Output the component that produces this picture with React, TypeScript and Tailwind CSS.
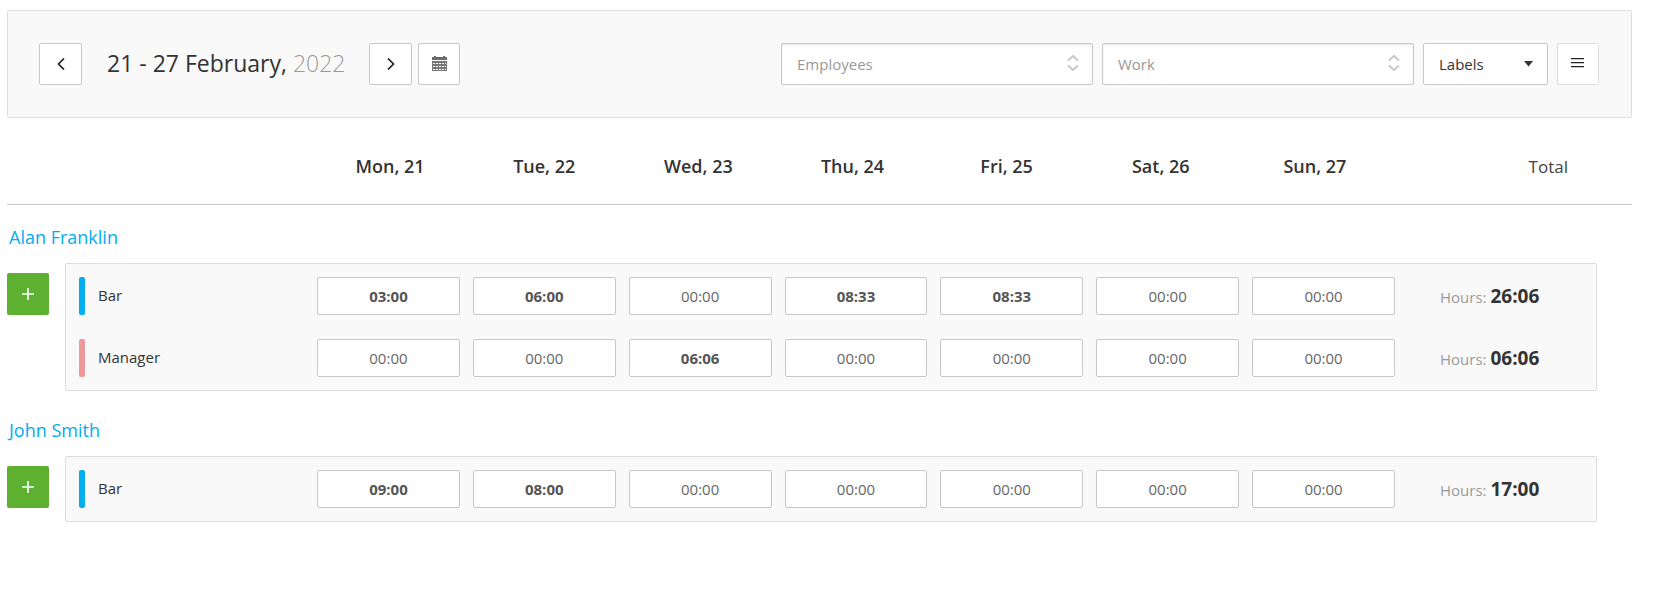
import { useState } from 'react';

interface WorkRow {
  title: string;
  color: string;
  hours: string[];
}

interface Employee {
  name: string;
  works: WorkRow[];
}

const DAYS = ['Mon, 21', 'Tue, 22', 'Wed, 23', 'Thu, 24', 'Fri, 25', 'Sat, 26', 'Sun, 27'];

const EMPTY = '00:00';

const INITIAL: Employee[] = [
  {
    name: 'Alan Franklin',
    works: [
      { title: 'Bar', color: 'bg-[#00aeef]', hours: ['03:00', '06:00', EMPTY, '08:33', '08:33', EMPTY, EMPTY] },
      { title: 'Manager', color: 'bg-[#ef9a9a]', hours: [EMPTY, EMPTY, '06:06', EMPTY, EMPTY, EMPTY, EMPTY] },
    ],
  },
  {
    name: 'John Smith',
    works: [
      { title: 'Bar', color: 'bg-[#00aeef]', hours: ['09:00', '08:00', EMPTY, EMPTY, EMPTY, EMPTY, EMPTY] },
    ],
  },
];

const sumHours = (hours: string[]) => {
  const minutes = hours.reduce((total, value) => {
    const [h, m] = value.split(':').map(Number);
    return total + (h || 0) * 60 + (m || 0);
  }, 0);
  const pad = (n: number) => String(n).padStart(2, '0');
  return `${pad(Math.floor(minutes / 60))}:${pad(minutes % 60)}`;
};

const iconButton = 'flex h-[42px] shrink-0 items-center justify-center rounded-xs border bg-white';

const CalendarIcon = () => (
  <svg width="15" height="16" viewBox="0 0 15 16" fill="none" aria-hidden="true">
    <path d="M0 1h2V0h2v1h7V0h2v1h2v3H0z" fill="#6b6b6b" />
    <path d="M0 5h15v10H0z" fill="#777" />
    <path d="M1 7.5h13M1 10.5h13M1 13.5h13" stroke="#fff" strokeDasharray="2 1" />
  </svg>
);

const FilterSelect = ({ label }: { label: string }) => (
  <div className="relative w-[312px] min-w-0">
    <select
      aria-label={label}
      className="h-[42px] w-full appearance-none rounded-xs border border-[#c8c8c8] bg-white pr-9 pl-[15px] text-[15px] text-[#999] shadow-[inset_0_1px_2px_rgba(0,0,0,0.1)]"
    >
      <option>{label}</option>
    </select>
    <svg
      className="pointer-events-none absolute top-3 right-[14px]"
      width="12"
      height="16"
      viewBox="0 0 12 16"
      fill="none"
      stroke="#c8c8c8"
      strokeWidth="2"
      aria-hidden="true"
    >
      <path d="M1 5.500 6 1l5 4.500M1 10.500 6 15l5-4.500" />
    </svg>
  </div>
);

export default function App() {
  const [employees, setEmployees] = useState<Employee[]>(INITIAL);

  const handleHoursChange = (employeeIndex: number, workIndex: number, dayIndex: number, value: string) => {
    setEmployees(prev =>
      prev.map((employee, e) =>
        e !== employeeIndex
          ? employee
          : {
              ...employee,
              works: employee.works.map((work, w) =>
                w !== workIndex ? work : { ...work, hours: work.hours.map((h, d) => (d === dayIndex ? value : h)) }
              ),
            }
      )
    );
  };

  const addWork = (employeeIndex: number) => {
    setEmployees(prev =>
      prev.map((employee, e) =>
        e !== employeeIndex
          ? employee
          : {
              ...employee,
              works: [...employee.works, { title: 'Bar', color: 'bg-[#00aeef]', hours: DAYS.map(() => EMPTY) }],
            }
      )
    );
  };

  return (
    <main className="min-h-screen bg-white pt-[10px] pr-[25px] pb-10 pl-[7px] font-['Open_Sans',sans-serif] text-[15px] text-[#333]">
      <header className="flex items-center justify-between rounded-xs border border-[#ddd] bg-[#f9f9f9] py-8 pr-8 pl-[31px]">
        <div className="flex items-center">
          <button type="button" aria-label="Previous week" className={`${iconButton} w-[43px] border-[#c8c8c8]`}>
            <svg width="8" height="12" viewBox="0 0 8 12" fill="none" stroke="#222" strokeWidth="1.7" aria-hidden="true">
              <path d="M7 .5 1.500 6 7 11.500" />
            </svg>
          </button>
          <h1 className="pr-6 pb-[2px] pl-[25px] text-[23px] leading-10 font-medium whitespace-nowrap">
            21 - 27 February, <span className="font-light text-[#999]">2022</span>
          </h1>
          <button type="button" aria-label="Next week" className={`${iconButton} w-[43px] border-[#c8c8c8]`}>
            <svg width="8" height="12" viewBox="0 0 8 12" fill="none" stroke="#222" strokeWidth="1.7" aria-hidden="true">
              <path d="M1 .5 6.500 6 1 11.500" />
            </svg>
          </button>
          <button type="button" aria-label="Open calendar" className={`${iconButton} ml-[6px] w-[42px] border-[#c8c8c8]`}>
            <CalendarIcon />
          </button>
        </div>

        <div className="flex min-w-0 items-center gap-[9px]">
          <FilterSelect label="Employees" />
          <FilterSelect label="Work" />
          <div className="relative w-[125px] shrink-0">
            <select
              aria-label="Labels"
              className="h-[42px] w-full appearance-none rounded-xs border border-[#c8c8c8] bg-white pr-8 pl-[15px] text-[15px] text-[#333]"
            >
              <option>Labels</option>
            </select>
            <svg
              className="pointer-events-none absolute top-[18px] right-[15px]"
              width="9"
              height="6"
              viewBox="0 0 9 6"
              fill="#333"
              aria-hidden="true"
            >
              <path d="M0 0h9L4.500 5.500z" />
            </svg>
          </div>
          <button type="button" aria-label="Menu" className={`${iconButton} w-[42px] border-[#ddd] pb-[2px]`}>
            <svg width="14" height="10" viewBox="0 0 14 10" stroke="#222" strokeWidth="1.200" aria-hidden="true">
              <path d="M0 .6h13M0 4.600h13M0 8.600h13" />
            </svg>
          </button>
        </div>
      </header>

      <table className="w-full table-fixed border-collapse">
        <thead>
          <tr className="h-[86px] border-b border-[#c8c8c8] text-[18px]">
            <td className="w-[306px]" />
            {DAYS.map(day => (
              <th key={day} scope="col" className="pt-3 font-semibold">
                {day}
              </th>
            ))}
            <th scope="col" className="w-[240px] pt-3 pr-16 text-right text-[17px] font-normal text-[#444]">
              Total
            </th>
          </tr>
        </thead>
        <tbody>
          {employees.map((employee, e) => (
            <tr key={employee.name}>
              <td colSpan={DAYS.length + 2} className="pt-5 pb-[7px]">
                <h2 className="pl-[2px] text-[18px] leading-6">
                  <a href="#" className="text-[#00aeef]">
                    {employee.name}
                  </a>
                </h2>
                <div className="mt-[14px] flex items-start gap-4 pr-[35px]">
                  <button
                    type="button"
                    aria-label={`Add work for ${employee.name}`}
                    onClick={() => addWork(e)}
                    className="mt-[10px] flex h-[42px] w-[42px] shrink-0 items-center justify-center rounded-xs bg-[#5eb130]"
                  >
                    <svg width="12" height="12" viewBox="0 0 12 12" stroke="#fff" strokeWidth="1.600" aria-hidden="true">
                      <path d="M6 0v12M0 6h12" />
                    </svg>
                  </button>
                  <div className="flex-1 rounded-xs border border-[#ddd] bg-[#f9f9f9] py-px">
                    <table className="w-full table-fixed">
                      <tbody>
                        {employee.works.map((work, w) => (
                          <tr key={w}>
                            <th scope="row" className="w-[245px] py-3 pl-[13px] text-left font-normal">
                              <div className="flex items-center gap-[13px]">
                                <span className={`h-[38px] w-[6px] rounded-xs ${work.color}`} />
                                <span>{work.title}</span>
                              </div>
                            </th>
                            {work.hours.map((value, d) => (
                              <td key={d} className="py-3 pr-[7px] pl-[6px]">
                                <input
                                  type="text"
                                  aria-label={`${employee.name}, ${work.title}, ${DAYS[d]}`}
                                  value={value}
                                  onChange={ev => handleHoursChange(e, w, d, ev.target.value)}
                                  className={`block h-[38px] w-full rounded-xs border border-[#c8c8c8] bg-white text-center ${
                                    value === EMPTY ? 'text-[#666]' : 'font-bold text-[#555]'
                                  }`}
                                />
                              </td>
                            ))}
                            <td className="w-[194px] pt-[2px] pl-[38px] text-[#999]">
                              Hours: <strong className="text-[19px] font-bold text-[#333]">{sumHours(work.hours)}</strong>
                            </td>
                          </tr>
                        ))}
                      </tbody>
                    </table>
                  </div>
                </div>
              </td>
            </tr>
          ))}
        </tbody>
      </table>
    </main>
  );
}
